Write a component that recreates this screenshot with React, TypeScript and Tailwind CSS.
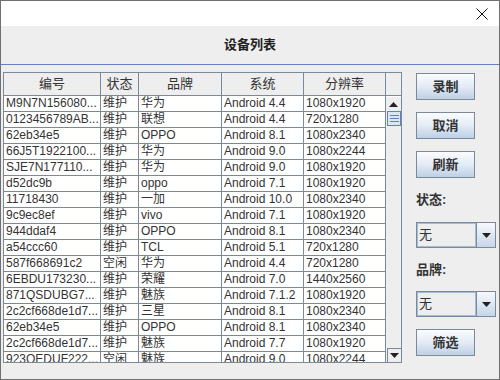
import React from "react"

const rows: string[][] = [
  ["M9N7N156080...", "维护", "华为", "Android 4.4", "1080x1920"],
  ["0123456789AB...", "维护", "联想", "Android 4.4", "720x1280"],
  ["62eb34e5", "维护", "OPPO", "Android 8.1", "1080x2340"],
  ["66J5T1922100...", "维护", "华为", "Android 9.0", "1080x2244"],
  ["SJE7N177110...", "维护", "华为", "Android 9.0", "1080x1920"],
  ["d52dc9b", "维护", "oppo", "Android 7.1", "1080x1920"],
  ["11718430", "维护", "一加", "Android 10.0", "1080x2340"],
  ["9c9ec8ef", "维护", "vivo", "Android 7.1", "1080x1920"],
  ["944ddaf4", "维护", "OPPO", "Android 8.1", "1080x2340"],
  ["a54ccc60", "维护", "TCL", "Android 5.1", "720x1280"],
  ["587f668691c2", "空闲", "华为", "Android 4.4", "720x1280"],
  ["6EBDU173230...", "维护", "荣耀", "Android 7.0", "1440x2560"],
  ["871QSDUBG7...", "维护", "魅族", "Android 7.1.2", "1080x1920"],
  ["2c2cf668de1d7...", "维护", "三星", "Android 8.1", "1080x2340"],
  ["62eb34e5", "维护", "OPPO", "Android 8.1", "1080x2340"],
  ["2c2cf668de1d7...", "维护", "魅族", "Android 7.7", "1080x1920"],
  ["923QEDUF222...", "空闲", "魅族", "Android 9.0", "1080x2244"],
]

const headers = ["编号", "状态", "品牌", "系统", "分辨率"]
const widths = ["w-[97px]", "w-[38px]", "w-[83px]", "w-[82px]", "w-[82px]"]

const font = { fontFamily: '"Liberation Sans", "Noto Sans CJK SC", sans-serif' }

function SwingButton({ label }: { label: string }) {
  return (
    <button className="flex h-[27px] w-[59px] items-center justify-center border border-[#7a8a99] bg-gradient-to-b from-[#fbfcfe] via-[#e3ebf5] to-[#bdd0e6] text-[13px] font-bold text-[#333333]">
      {label}
    </button>
  )
}

function Combo() {
  return (
    <div className="flex h-[26px] w-[80px] border border-[#7a8a99] bg-[#eeeeee]">
      <div className="flex flex-1 items-center border border-[#a3bcd9] pl-[1px] text-[13px] text-[#333333]">
        无
      </div>
      <div className="flex w-[19px] items-center justify-center border-l border-[#7a8a99] bg-gradient-to-b from-[#f7f9fc] to-[#c6d6e9]">
        <svg width="9" height="5" viewBox="0 0 9 5">
          <path d="M0 0 H9 L4.5 5 Z" fill="#222" />
        </svg>
      </div>
    </div>
  )
}

export default function App() {
  return (
    <div
      className="flex h-[380px] w-[500px] flex-col border border-[#707070] bg-[#eeeeee] text-[#333333]"
      style={font}
    >
      <div className="flex h-[25px] shrink-0 items-center justify-end bg-white pr-[11px]">
        <svg width="12" height="12" viewBox="0 0 12 12">
          <path d="M0.5 0.5 L11.5 11.5 M11.5 0.5 L0.5 11.5" stroke="#111" strokeWidth="1" />
        </svg>
      </div>

      <div className="flex h-[38px] shrink-0 items-center justify-center text-[13px] font-bold text-[#222]">
        设备列表
      </div>
      <div className="h-px shrink-0 bg-[#6382bf]" />

      <div className="flex pl-[2px] pt-[7px]">
        <div className="flex h-[291px] w-[399px] flex-col border border-[#7a8a99] bg-[#eeeeee]">
          <div className="flex h-[23px] shrink-0 border-b border-[#7a8a99]">
            {headers.map((h, i) => (
              <div
                key={h}
                className={`${widths[i]} flex items-center justify-center border-r border-[#7a8a99] text-[13px] text-[#333333]`}
              >
                {h}
              </div>
            ))}
            <div className="flex-1" />
          </div>
          <div className="flex min-h-0 flex-1">
            <div className="w-[382px] overflow-hidden">
              {rows.map((r, ri) => (
                <div key={ri} className="flex h-[16px] border-b border-[#7a8a99] bg-white">
                  {r.map((c, ci) => (
                    <div
                      key={ci}
                      className={`${widths[ci]} overflow-hidden whitespace-nowrap border-r border-[#7a8a99] pl-[2px] text-[12px] leading-[15px] text-[#333333]`}
                    >
                      {c}
                    </div>
                  ))}
                </div>
              ))}
            </div>
            <div className="flex w-[15px] flex-col bg-[#eeeeee]">
              <div className="flex h-[15px] items-center justify-center border-t border-white">
                <svg width="9" height="5" viewBox="0 0 9 5">
                  <path d="M0 5 H9 L4.5 0 Z" fill="#222" />
                </svg>
              </div>
              <div className="ml-[1px] flex h-[15px] flex-col items-center justify-center gap-[2px] border border-[#6382bf] bg-[#dce6f2]">
                <div className="h-px w-[9px] bg-[#6382bf]" />
                <div className="h-px w-[9px] bg-[#6382bf]" />
                <div className="h-px w-[9px] bg-[#6382bf]" />
              </div>
              <div className="flex-1" />
              <div className="ml-[1px] flex h-[14px] items-center justify-center border border-[#7a8a99] border-r-0 border-b-0">
                <svg width="9" height="5" viewBox="0 0 9 5">
                  <path d="M0 0 H9 L4.5 5 Z" fill="#222" />
                </svg>
              </div>
            </div>
          </div>
        </div>

        <div className="ml-[14px] mt-px flex flex-col">
          <SwingButton label="录制" />
          <div className="h-[12px]" />
          <SwingButton label="取消" />
          <div className="h-[12px]" />
          <SwingButton label="刷新" />
          <div className="flex h-[44px] items-center text-[13px] font-bold text-[#333333]">状态:</div>
          <Combo />
          <div className="flex h-[43px] items-center text-[13px] font-bold text-[#333333]">品牌:</div>
          <Combo />
          <div className="h-[12px]" />
          <SwingButton label="筛选" />
        </div>
      </div>
    </div>
  )
}
